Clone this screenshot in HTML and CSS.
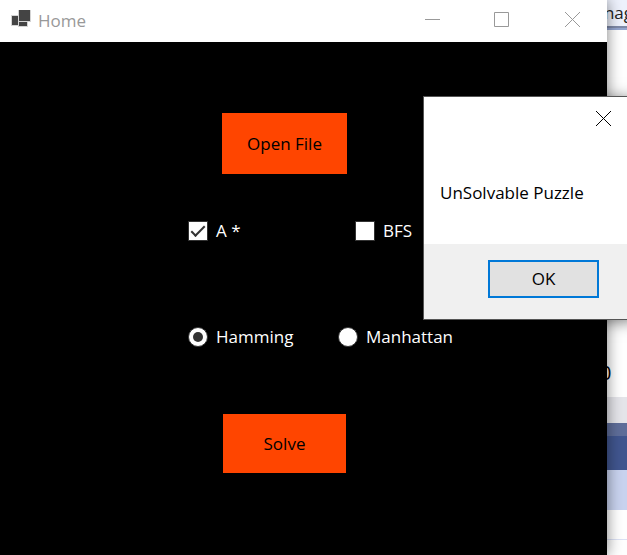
FILE: index.html
```html
<!DOCTYPE html>
<html lang="en">
<head>
<meta charset="utf-8">
<title>Home</title>
<link rel="stylesheet" href="styles.css">
</head>
<body>
<div class="desktop">
  <main class="window">
    <header class="titlebar">
      <svg class="app-icon" width="20" height="18" viewBox="0 0 20 18" aria-hidden="true">
        <path fill="#d4d4d4" d="M0 5h7V0h13v12h-3v5H7v-1H0z"/>
        <path fill="#444" d="M1 6h6v9H1zM8 0h11v11H8zM8 12h8v4H8z"/>
      </svg>
      <h1 class="title">Home</h1>
      <button class="caption" aria-label="Minimize"><svg width="16" height="16" viewBox="0 0 16 16"><path d="M1 8.500h15"/></svg></button>
      <button class="caption" aria-label="Maximize"><svg width="16" height="16" viewBox="0 0 16 16"><path d="M.5 1.500h14v14H.5z"/></svg></button>
      <button class="caption" aria-label="Close"><svg width="16" height="16" viewBox="0 0 16 16"><path d="M1 1l15 15M16 1L1 16"/></svg></button>
    </header>
    <form class="form">
      <button type="button" class="action open">Open File</button>
      <div class="options algorithms">
        <label class="option"><input type="checkbox" class="check" checked><span>A *</span></label>
        <label class="option"><input type="checkbox" class="check"><span>BFS</span></label>
      </div>
      <div class="options heuristics">
        <label class="option"><input type="radio" name="heuristic" class="radio" checked><span>Hamming</span></label>
        <label class="option"><input type="radio" name="heuristic" class="radio"><span>Manhattan</span></label>
      </div>
      <button type="button" class="action solve">Solve</button>
    </form>
  </main>
  <aside class="background">
    <div class="tab"><span>nag</span></div>
    <div class="page"><span>0</span></div>
    <div class="band grey"></div>
    <div class="band slate"></div>
    <div class="band navy"></div>
    <div class="band pale"></div>
    <div class="rule"></div>
  </aside>
  <section class="dialog" role="dialog" aria-labelledby="message">
    <div class="dialog-bar">
      <button class="dialog-close" aria-label="Close"><svg width="16" height="16" viewBox="0 0 16 16"><path d="M0 0l15 15M15 0L0 15"/></svg></button>
    </div>
    <p class="message" id="message">UnSolvable Puzzle</p>
    <footer class="dialog-footer"><button class="ok">OK</button></footer>
  </section>
</div>
</body>
</html>
```
FILE: styles.css
```css
* { box-sizing: border-box; }

body {
  margin: 0;
  font: 17px/24px "Open Sans", "Noto Sans", sans-serif;
  color: #000;
  background: #fff;
}

button {
  padding: 0;
  border: 0;
  font: inherit;
  color: inherit;
}

svg { display: block; fill: none; stroke: none; }

.desktop {
  position: relative;
  display: flex;
  min-height: 100vh;
  overflow: hidden;
}

.window {
  position: relative;
  flex: 1;
  display: flex;
  flex-direction: column;
  background: #000;
  box-shadow: 0 0 14px rgba(0, 0, 0, 0.5);
  z-index: 1;
}

.titlebar {
  display: flex;
  align-items: center;
  height: 42px;
  padding-left: 11px;
  background: #fff;
  color: #999;
}

.app-icon { margin-bottom: 4px; }

.title {
  flex: 1;
  margin: 0 0 0 7px;
  font-size: 17px;
  font-weight: 400;
}

.caption {
  display: grid;
  place-items: center;
  width: 70px;
  height: 38px;
  margin-bottom: 4px;
  background: none;
}

.caption svg { stroke: #999; }

.form {
  display: flex;
  flex-direction: column;
  align-items: flex-start;
  padding: 71px 0 0 188px;
  color: #fff;
}

.action {
  margin-left: 34px;
  background: #ff4500;
  color: #000;
}

.open { width: 125px; height: 61px; }

.solve {
  width: 123px;
  height: 59px;
  margin-left: 35px;
}

.options { display: grid; }

.algorithms {
  grid-template-columns: 167px auto;
  margin: 45px 0 82px;
}

.heuristics {
  grid-template-columns: 150px auto;
  margin-bottom: 65px;
}

.option {
  display: flex;
  align-items: center;
  gap: 8px;
}

.check,
.radio {
  appearance: none;
  width: 20px;
  height: 20px;
  margin: 0;
  border: 1px solid #333;
  background: #fff;
}

.radio { border-radius: 50%; }

.check:checked::before {
  content: "";
  display: block;
  width: 12px;
  height: 5px;
  margin: 4px 0 0 2px;
  border: solid #333;
  border-width: 0 0 2px 2px;
  transform: rotate(-45deg);
}

.radio:checked::before {
  content: "";
  display: block;
  width: 10px;
  height: 10px;
  margin: 4px;
  border-radius: 50%;
  background: #333;
}

.background {
  display: flex;
  flex-direction: column;
  width: 20px;
  overflow: hidden;
}

.tab {
  display: flex;
  justify-content: flex-end;
  height: 30px;
  padding-top: 1px;
  border-bottom: 2px solid #95a6d0;
  background: #eef2fd;
  box-shadow: inset 0 -2px #7f8aa8;
  color: #222;
}

.tab span { margin-right: -6px; }

.page {
  display: flex;
  align-items: flex-end;
  height: 367px;
  padding-bottom: 12px;
  font-size: 20px;
}

.page span { margin-left: -7px; }

.grey { height: 26px; background: #e5e5ea; }
.slate { height: 13px; background: #5f6e9a; }
.navy { height: 34px; background: #41568f; }
.pale { height: 40px; background: #c9d3ef; }

.rule {
  height: 30px;
  border-bottom: 1px solid #dce2f5;
}

.dialog {
  position: absolute;
  top: 96px;
  right: -8px;
  z-index: 2;
  width: 212px;
  border: 1px solid #555;
  background: #fff;
  box-shadow: 0 2px 14px rgba(0, 0, 0, 0.5);
}

.dialog-bar {
  display: flex;
  justify-content: flex-end;
  padding: 14px 22px 0 0;
}

.dialog-close { background: none; }
.dialog-close svg { stroke: #000; }

.message {
  margin: 0;
  padding: 54px 0 39px 16px;
}

.dialog-footer {
  display: flex;
  justify-content: flex-end;
  padding: 16px 35px 21px 0;
  background: #f0f0f0;
}

.ok {
  width: 111px;
  height: 38px;
  border: 2px solid #0078d7;
  background: #e1e1e1;
}
```
